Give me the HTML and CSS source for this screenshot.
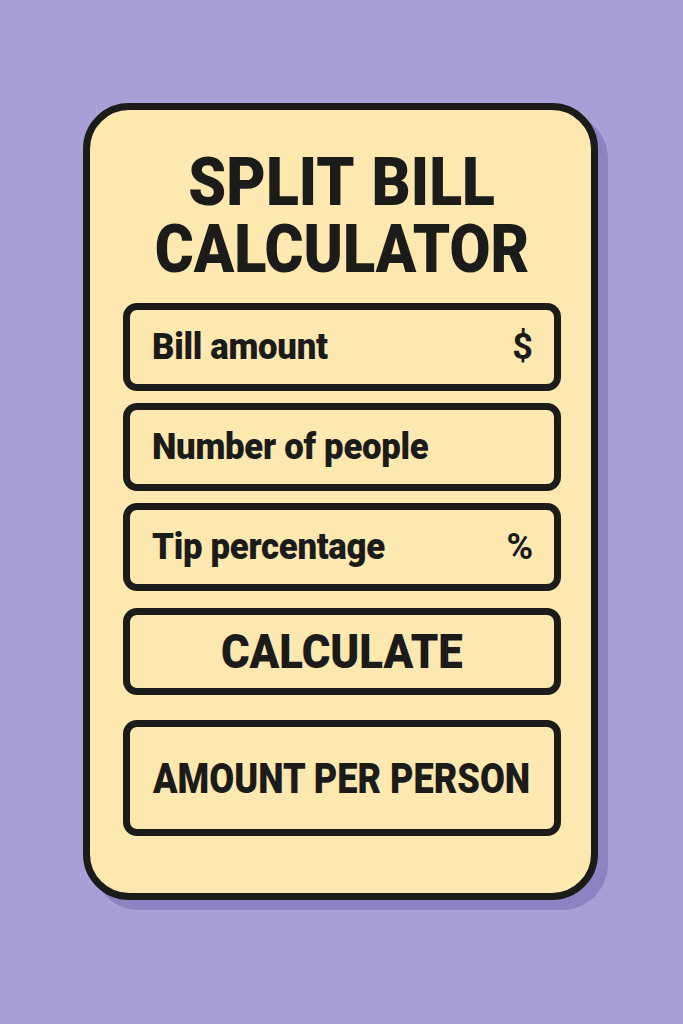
FILE: index.html
```html
<!DOCTYPE html>
<html lang="en">
<head>
<meta charset="utf-8">
<title>Split Bill Calculator</title>
<link rel="stylesheet" href="styles.css">
</head>
<body>
  <main class="card">
    <h1 class="title">
      <span class="title-line title-top">SPLIT BILL</span>
      <span class="title-line">CALCULATOR</span>
    </h1>
    <div class="field field-bill">
      <span class="label">Bill amount</span>
      <span class="unit">$</span>
    </div>
    <div class="field field-people">
      <span class="label">Number of people</span>
    </div>
    <div class="field field-tip">
      <span class="label">Tip percentage</span>
      <span class="unit">%</span>
    </div>
    <button class="btn-calc" type="button"><span class="btn-text">CALCULATE</span></button>
    <div class="result"><span class="result-text">AMOUNT PER PERSON</span></div>
  </main>
</body>
</html>
```

FILE: styles.css
```css
* {
  box-sizing: border-box;
}

html, body {
  margin: 0;
  padding: 0;
}

body {
  width: 683px;
  height: 1024px;
  background: #a89fd6;
  font-family: Roboto, "Liberation Sans", sans-serif;
  color: #1b1b1a;
  padding: 103px 0 0 83px;
}

.card {
  width: 515px;
  height: 797px;
  background: #fde8b0;
  border: 7px solid #1b1b1a;
  border-radius: 46px;
  box-shadow: 10px 10px 0 #8c83c2;
  padding: 39px 30px 0 33px;
  display: flex;
  flex-direction: column;
}

.title {
  margin: 0 0 20px;
  font-size: 66px;
  line-height: 67px;
  font-weight: 900;
  display: flex;
  flex-direction: column;
  align-items: center;
}

.title-line {
  display: block;
  transform: scaleX(0.9);
  white-space: nowrap;
}

.title-top {
  transform: scaleX(0.92);
  word-spacing: 4px;
}

.field {
  height: 88px;
  border: 7px solid #1b1b1a;
  border-radius: 14px;
  display: flex;
  align-items: center;
  justify-content: space-between;
  padding: 0 21px 0 22px;
  font-size: 36px;
  font-weight: 900;
}

.field + .field {
  margin-top: 12px;
}

.field-tip {
  margin-top: 11px;
}

.label {
  display: inline-block;
  transform: scaleX(0.965);
  transform-origin: left center;
  white-space: nowrap;
  letter-spacing: -0.3px;
}

.unit {
  display: inline-block;
  font-weight: 700;
}

.btn-calc {
  margin-top: 17px;
  height: 87px;
  border: 7px solid #1b1b1a;
  border-radius: 14px;
  background: transparent;
  color: inherit;
  font-family: inherit;
  font-size: 48px;
  font-weight: 900;
  padding: 0;
  display: flex;
  align-items: center;
  justify-content: center;
}

.btn-text,
.result-text {
  display: inline-block;
  transform: scaleX(0.91);
  white-space: nowrap;
}

.result-text {
  transform: scaleX(0.84);
}

.result {
  margin-top: 25px;
  height: 116px;
  border: 7px solid #1b1b1a;
  border-radius: 14px;
  display: flex;
  align-items: center;
  justify-content: center;
  font-size: 43px;
  font-weight: 900;
}
```
